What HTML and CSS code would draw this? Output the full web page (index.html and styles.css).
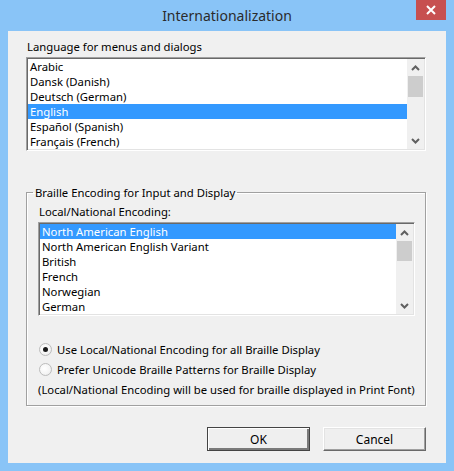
FILE: index.html
```html
<!DOCTYPE html>
<html>
<head>
<meta charset="utf-8">
<link rel="stylesheet" href="styles.css">
</head>
<body>
<div class="window">
  <div class="titlebar">
    <div class="title">Internationalization</div>
    <div class="close"><svg width="10" height="10" viewBox="0 0 10 10"><path d="M1 1L9 9M9 1L1 9" stroke="#fff" stroke-width="2"/></svg></div>
  </div>
  <div class="client">
    <div class="label">Language for menus and dialogs</div>
    <div class="listbox">
      <ul class="items">
        <li>Arabic</li>
        <li>Dansk (Danish)</li>
        <li>Deutsch (German)</li>
        <li class="sel">English</li>
        <li>Español (Spanish)</li>
        <li>Français (French)</li>
      </ul>
      <div class="scrollbar">
        <div class="arrow"><svg width="9" height="6" viewBox="0 0 9 6"><path d="M1 5L4.5 1.5L8 5" fill="none" stroke="#606060" stroke-width="2"/></svg></div>
        <div class="track"><div class="thumb"></div></div>
        <div class="arrow"><svg width="9" height="6" viewBox="0 0 9 6"><path d="M1 1L4.5 4.5L8 1" fill="none" stroke="#606060" stroke-width="2"/></svg></div>
      </div>
    </div>
    <fieldset class="group">
      <legend>Braille Encoding for Input and Display</legend>
      <div class="label">Local/National Encoding:</div>
      <div class="listbox">
        <ul class="items">
          <li class="sel">North American English</li>
          <li>North American English Variant</li>
          <li>British</li>
          <li>French</li>
          <li>Norwegian</li>
          <li>German</li>
        </ul>
        <div class="scrollbar">
          <div class="arrow"><svg width="9" height="6" viewBox="0 0 9 6"><path d="M1 5L4.5 1.5L8 5" fill="none" stroke="#606060" stroke-width="2"/></svg></div>
          <div class="track"><div class="thumb thumb2"></div></div>
          <div class="arrow"><svg width="9" height="6" viewBox="0 0 9 6"><path d="M1 1L4.5 4.5L8 1" fill="none" stroke="#606060" stroke-width="2"/></svg></div>
        </div>
      </div>
      <div class="options">
        <div class="radio-row"><span class="radio checked"></span><span>Use Local/National Encoding for all Braille Display</span></div>
        <div class="radio-row"><span class="radio"></span><span>Prefer Unicode Braille Patterns for Braille Display</span></div>
        <div class="note">(Local/National Encoding will be used for braille displayed in Print Font)</div>
      </div>
    </fieldset>
    <div class="buttons">
      <button class="btn default">OK</button>
      <button class="btn">Cancel</button>
    </div>
  </div>
</div>
</body>
</html>
```

FILE: styles.css
```css
html, body {
  margin: 0;
  padding: 0;
}
body {
  width: 454px;
  height: 471px;
  overflow: hidden;
  background: #89c4f7;
  font-family: "Noto Sans", "DejaVu Sans", sans-serif;
  font-size: 11.3px;
  color: #000;
}
.window {
  display: flex;
  flex-direction: column;
  height: 471px;
}
.titlebar {
  height: 31px;
  display: grid;
  grid-template-columns: 1fr auto 1fr;
  padding-right: 8px;
}
.title {
  grid-column: 2;
  font-size: 14px;
  line-height: 32px;
  color: #2b2b2b;
  padding-left: 8px;
}
.close {
  grid-column: 3;
  justify-self: end;
  align-self: start;
  width: 30px;
  height: 20px;
  background: #c75050;
  display: flex;
  align-items: center;
  justify-content: center;
}
.client {
  margin: 0 8px;
  height: 432px;
  background: #f0f0f0;
  padding: 8px 20px 0 18px;
  box-sizing: border-box;
  display: flex;
  flex-direction: column;
}
.label {
  line-height: 15px;
  padding-left: 1px;
  margin-bottom: 3px;
}
.listbox {
  display: flex;
  height: 94px;
  flex-shrink: 0;
  box-sizing: border-box;
  border-top: 1px solid #a0a0a0;
  border-left: 1px solid #a0a0a0;
  border-right: 1px solid #fff;
  border-bottom: 1px solid #fff;
  box-shadow: inset 1px 1px 0 #696969, inset -1px -1px 0 #e3e3e3;
  padding: 1px;
  background: #fff;
}
.items {
  list-style: none;
  margin: 0;
  padding: 0;
  flex: 1;
  overflow: hidden;
}
.items li {
  height: 15px;
  line-height: 15px;
  padding-left: 2px;
  white-space: nowrap;
}
.items li.sel {
  background: #3399ff;
  color: #fff;
}
.scrollbar {
  width: 17px;
  background: #f0f0f0;
  display: flex;
  flex-direction: column;
}
.arrow {
  height: 17px;
  display: flex;
  align-items: center;
  justify-content: center;
}
.track {
  flex: 1;
}
.thumb {
  margin: 0 1px;
  height: 21px;
  background: #cdcdcd;
}
.thumb2 {
  height: 20px;
}
.group {
  margin: 34px 0 0 0;
  padding: 4px 10px 8px 11px;
  border: 1px solid #a0a0a0;
  box-shadow: 1px 1px 0 #fff, inset 1px 1px 0 #fff;
  min-width: 0;
}
.group legend {
  padding: 0 2px;
  margin-left: -5px;
  line-height: 15px;
}
.options {
  margin-top: 26px;
  display: flex;
  flex-direction: column;
  gap: 5px;
}
.radio-row {
  display: flex;
  align-items: center;
  line-height: 15px;
  height: 15px;
}
.radio {
  width: 11px;
  height: 11px;
  border-radius: 50%;
  border: 1px solid #bcbcbc;
  background: radial-gradient(circle at 40% 40%, #ffffff 0%, #f4f4f4 60%, #e0e0e0 100%);
  margin-left: 1px;
  margin-right: 5px;
  display: flex;
  align-items: center;
  justify-content: center;
}
.radio.checked::after {
  content: "";
  width: 5px;
  height: 5px;
  border-radius: 50%;
  background: #1a1a1a;
}
.note {
  line-height: 15px;
  white-space: nowrap;
}
.buttons {
  margin-top: 21px;
  display: flex;
  justify-content: flex-end;
  gap: 13px;
}
.btn {
  width: 103px;
  height: 24px;
  font: inherit;
  font-size: 12px;
  color: #000;
  background: #efefef;
  border-top: 1px solid #fff;
  border-left: 1px solid #fff;
  border-right: 1px solid #696969;
  border-bottom: 1px solid #696969;
  box-shadow: inset -1px -1px 0 #a0a0a0, inset 1px 1px 0 #e3e3e3;
  padding: 0;
}
.btn.default {
  border: 1px solid #444;
  box-shadow: inset 1px 1px 0 #fff, inset -2px -2px 0 #7a7a7a;
}
```
